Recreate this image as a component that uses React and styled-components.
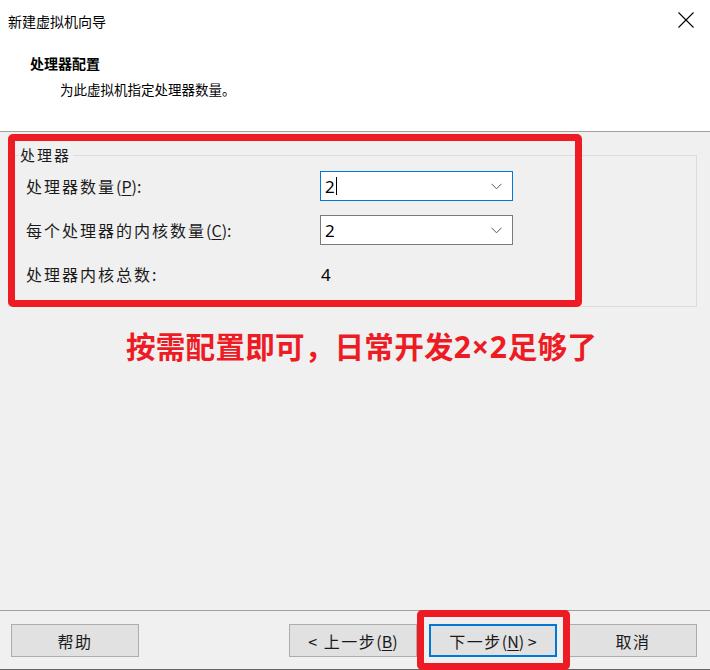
import React from "react";
import styled, { createGlobalStyle } from "styled-components";

const Global = createGlobalStyle`
  html, body { margin: 0; padding: 0; background: #f0f0f0; }
  body { font-family: "Noto Sans CJK SC", "Noto Sans", sans-serif; color: #000; }
  * { box-sizing: border-box; }
`;

const Window = styled.div`
  position: relative;
  width: 710px;
  height: 670px;
  display: flex;
  flex-direction: column;
  background: #f0f0f0;
  overflow: hidden;
`;

const Header = styled.header`
  height: 132px;
  flex: none;
  background: #fff;
  border-bottom: 1px solid #a0a0a0;
  display: flex;
  flex-direction: column;
`;

const TitleBar = styled.div`
  height: 40px;
  display: flex;
  align-items: center;
  justify-content: space-between;
  padding: 0 16px 0 8px;
`;

const Title = styled.div`
  font-size: 14px;
  line-height: 1;
  margin-top: 1px;
`;

const Close = styled.svg`
  width: 16px;
  height: 16px;
  display: block;
`;

const Heading = styled.div`
  margin: 13px 0 0 30px;
  font-size: 14px;
  font-weight: 700;
  line-height: 20px;
`;

const Sub = styled.div`
  margin: 6px 0 0 60px;
  font-size: 13.5px;
  line-height: 20px;
`;

const Body = styled.main`
  flex: 1;
  display: flex;
  flex-direction: column;
  padding: 14px 13px 0 8px;
`;

const Group = styled.fieldset`
  margin: 0;
  padding: 0 0 0 17px;
  height: 161px;
  border: 1px solid #dcdcdc;
  display: grid;
  grid-template-columns: 294px 193px;
  grid-auto-rows: 44px;
  align-items: center;
  align-content: start;
`;

const Legend = styled.legend`
  margin-left: -8px;
  padding: 0 2px;
  font-size: 15px;
  letter-spacing: 2px;
  line-height: 18px;
  color: #1a1a1a;
`;

const Label = styled.div`
  font-size: 16px;
  letter-spacing: 2px;
  color: #1a1a1a;
  line-height: 20px;
`;

const Latin = styled.span`
  letter-spacing: 0;
`;

const U = styled.span`
  text-decoration: underline;
  text-underline-offset: 2px;
`;

const Combo = styled.div`
  height: 30px;
  width: 193px;
  background: #fff;
  border: 1px solid ${(p) => (p.$focused ? "#0078d7" : "#7a7a7a")};
  display: flex;
  align-items: center;
  justify-content: space-between;
  padding: 0 10px 0 4px;
  font-family: "Noto Sans", "Noto Sans CJK SC", sans-serif;
  font-size: 17px;
`;

const Value = styled.span`
  display: flex;
  align-items: center;
  line-height: 1;
`;

const Caret = styled.span`
  display: inline-block;
  width: 1px;
  height: 18px;
  background: #000;
  margin-left: 1px;
`;

const Chevron = styled.svg`
  width: 11px;
  height: 7px;
  display: block;
`;

const Total = styled.div`
  font-family: "Noto Sans", sans-serif;
  font-size: 17px;
  padding-left: 1px;
`;

const Note = styled.div`
  margin: 19px 0 0 118px;
  font-size: 29.6px;
  font-weight: 700;
  color: #ed1c24;
  line-height: 40px;
  letter-spacing: 0.2px;
`;

const NoteNum = styled.span`
  font-family: "Noto Sans", sans-serif;
  font-size: 30px;
  letter-spacing: 0.8px;
`;

const Footer = styled.footer`
  height: 60px;
  flex: none;
  border-top: 1px solid #a0a0a0;
  border-bottom: 1px solid #646464;
  display: flex;
  align-items: flex-start;
  padding: 13px 13px 0 11px;
`;

const Button = styled.button`
  width: 128px;
  height: 33px;
  background: #e1e1e1;
  border: ${(p) => (p.$default ? "2px solid #0078d7" : "1px solid #adadad")};
  font-family: "Noto Sans CJK SC", "Noto Sans", sans-serif;
  font-size: 16px;
  letter-spacing: 1.5px;
  color: #1a1a1a;
  padding: 0;
  margin-left: ${(p) => p.$gap || 0}px;
  display: flex;
  align-items: center;
  justify-content: center;
  line-height: 1;
`;

const Spacer = styled.div`
  flex: 1;
`;

const Mark = styled.div`
  position: absolute;
  left: ${(p) => p.$x}px;
  top: ${(p) => p.$y}px;
  width: ${(p) => p.$w}px;
  height: ${(p) => p.$h}px;
  border: 7px solid #ed1c24;
  border-radius: 5px;
  pointer-events: none;
`;

const ChevronIcon = () => (
  <Chevron viewBox="0 0 11 7">
    <path d="M0.5 0.8 L5.5 5.8 L10.5 0.8" fill="none" stroke="#555" strokeWidth="1" />
  </Chevron>
);

export default function App() {
  return (
    <>
      <Global />
      <Window>
        <Header>
          <TitleBar>
            <Title>新建虚拟机向导</Title>
            <Close viewBox="0 0 16 16">
              <path d="M0.5 0.5 L15.5 15.5 M15.5 0.5 L0.5 15.5" stroke="#000" strokeWidth="1.1" fill="none" />
            </Close>
          </TitleBar>
          <Heading>处理器配置</Heading>
          <Sub>为此虚拟机指定处理器数量。</Sub>
        </Header>
        <Body>
          <Group>
            <Legend>处理器</Legend>
            <Label>
              处理器数量<Latin>(<U>P</U>):</Latin>
            </Label>
            <Combo $focused>
              <Value>
                2<Caret />
              </Value>
              <ChevronIcon />
            </Combo>
            <Label>
              每个处理器的内核数量<Latin>(<U>C</U>):</Latin>
            </Label>
            <Combo>
              <Value>2</Value>
              <ChevronIcon />
            </Combo>
            <Label>处理器内核总数:</Label>
            <Total>4</Total>
          </Group>
          <Note>
            按需配置即可，日常开发<NoteNum>2×2</NoteNum>足够了
          </Note>
        </Body>
        <Footer>
          <Button>帮助</Button>
          <Spacer />
          <Button>
            &lt; 上一步<Latin>(<U>B</U>)</Latin>
          </Button>
          <Button $default $gap={12}>
            下一步<Latin>(<U>N</U>) &gt;</Latin>
          </Button>
          <Button $gap={12}>取消</Button>
        </Footer>
        <Mark $x={8} $y={134} $w={574} $h={173} />
        <Mark $x={417} $y={610} $w={153} $h={60} />
      </Window>
    </>
  );
}
